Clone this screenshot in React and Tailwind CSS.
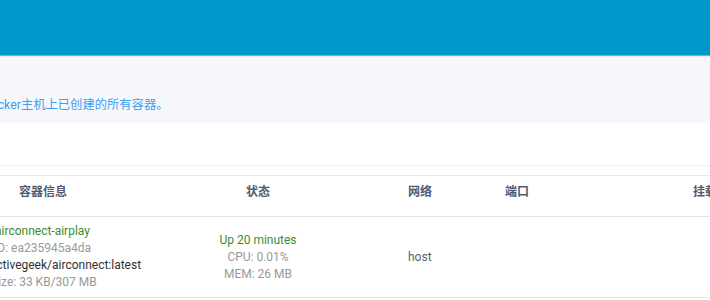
import React from 'react';

const font = { fontFamily: 'Roboto, "Noto Sans CJK SC", sans-serif' };

const ContainerRow = ({ item }) => (
    <div className="flex h-[81px] border-b border-[#e4e6ea]">
        <div className="w-[162px] shrink-0 flex flex-col justify-center pl-[34px] text-[12px] leading-[17px] whitespace-nowrap">
            <div className="-ml-[1px] text-[#3d8b37]">{item.name}</div>
            <div className="-ml-[2px] text-[#999]">ID: {item.id}</div>
            <div className="-ml-[13px] text-[#303133]">{item.image}</div>
            <div className="-ml-[5px] text-[#999]">Size: {item.size}</div>
        </div>
        <div className="w-[268px] shrink-0 flex flex-col justify-center items-center text-[12px] leading-[17px]">
            <div className="text-[#3d8b37]">{item.status}</div>
            <div className="text-[#999]">CPU: {item.cpu}</div>
            <div className="text-[#999]">MEM: {item.mem}</div>
        </div>
        <div className="w-[97px] shrink-0 flex items-center pl-[16px] text-[12px] text-[#606266]">{item.network}</div>
        <div className="w-[188px] shrink-0 flex items-center pl-[16px] text-[12px] text-[#606266]">{item.ports}</div>
        <div className="flex-1 flex items-center pl-[16px] text-[12px] text-[#606266]">{item.mounts}</div>
    </div>
);

const App = () => {
    const containers = [
        {
            name: 'airconnect-airplay',
            id: 'ea235945a4da',
            image: '1activegeek/airconnect:latest',
            size: '33 KB/307 MB',
            status: 'Up 20 minutes',
            cpu: '0.01%',
            mem: '26 MB',
            network: 'host',
            ports: '',
            mounts: '',
        },
    ];

    return (
        <div className="w-[710px] h-[300px] overflow-hidden bg-white" style={font}>
            <div className="h-[55px] bg-[#0099cc]" />
            <div className="h-[1px] bg-[#5cbbe0]" />
            <div className="h-[67px] bg-[#f7f8fc] border-t border-[#eceef4] flex items-end pb-[10px]">
                <p className="-ml-[42px] text-[12.3px] leading-[16px] text-[#3d9df0] whitespace-nowrap">
                    查看Docker主机上已创建的所有容器。
                </p>
            </div>
            <div className="h-[43px] border-b border-[#eef0f3]" />
            <div className="h-[10px] border-b border-[#e6e8ec]" />
            <div className="-ml-[38px] w-[900px]">
                <div className="flex h-[41px] border-b border-[#e2e4e8] text-[12px] leading-[16px] font-bold text-[#515a6e]">
                    <div className="w-[162px] shrink-0 text-center pt-[8px]">容器信息</div>
                    <div className="w-[268px] shrink-0 text-center pt-[8px]">状态</div>
                    <div className="w-[97px] shrink-0 pl-[16px] pt-[8px]">网络</div>
                    <div className="w-[188px] shrink-0 pl-[16px] pt-[8px]">端口</div>
                    <div className="flex-1 pl-[16px] pt-[8px]">挂载</div>
                </div>
                {containers.map((c) => (
                    <ContainerRow key={c.id} item={c} />
                ))}
            </div>
        </div>
    );
};

export default App;
